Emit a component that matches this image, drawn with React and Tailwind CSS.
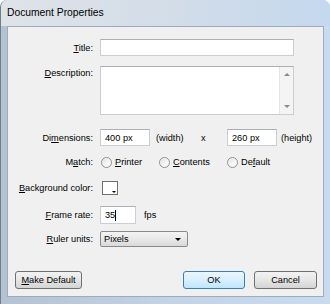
import React from "react";

const font = { fontFamily: '"Liberation Sans", Arial, sans-serif' };

function U({ children }) {
  return <span className="underline underline-offset-[1px]">{children}</span>;
}

function Label({ children, top }) {
  return (
    <div className={`w-[85px] shrink-0 text-right ${top ? "self-start pt-[1px]" : ""}`}>
      {children}
    </div>
  );
}

function TextBox({ className, children }) {
  return (
    <div
      className={`bg-white border border-[#c9ced6] border-t-[#abb0b8] flex items-center px-[4px] ${className}`}
    >
      {children}
    </div>
  );
}

function Radio({ children, className }) {
  return (
    <div className={`flex items-center gap-[3px] ${className}`}>
      <span className="w-[11px] h-[11px] rounded-full border border-[#8e8f8f] bg-gradient-to-br from-[#d9d9d9] via-[#f4f4f4] to-[#ffffff] shadow-[inset_0_0_0_1px_#f6f6f6]" />
      <span>{children}</span>
    </div>
  );
}

function Button({ children, className, primary }) {
  return (
    <div
      className={`h-[18px] rounded-[3px] border flex items-center justify-center ${
        primary
          ? "border-[#3c7fb1] bg-gradient-to-b from-[#eaf6fd] via-[#d9f0fc] to-[#bee6fd]"
          : "border-[#707070] bg-gradient-to-b from-[#f2f2f2] via-[#e6e6e6] to-[#d4d4d4]"
      } ${className}`}
    >
      {children}
    </div>
  );
}

export default function App() {
  return (
    <div
      className="w-[330px] h-[304px] flex flex-col bg-gradient-to-r from-[#b4c2d2] via-[#c2d3e6] to-[#c9dbef] rounded-t-[7px] border-l border-[#6f7d8c] overflow-hidden"
      style={font}
    >
      <div className="h-[26px] shrink-0 flex items-center px-[6px] text-[10.3px] text-black bg-gradient-to-r from-[#dfe3e8] via-[#d3dde8] to-[#c4d8ee]">
        Document Properties
      </div>
      <div className="mx-[6px] h-[271px] shrink-0 bg-[#f0f0f0] border border-[#9eabb9] flex flex-col text-[9.2px] text-black leading-[12px]">
        <div className="mt-[12px] flex items-center">
          <Label>
            <U>T</U>itle:
          </Label>
          <TextBox className="ml-[7px] w-[194px] h-[17px]" />
        </div>

        <div className="mt-[10px] flex">
          <Label top>
            <U>D</U>escription:
          </Label>
          <div className="ml-[7px] w-[194px] h-[49px] bg-white border border-[#c9ced6] border-t-[#abb0b8] flex justify-end">
            <div className="w-[14px] h-full bg-[#f4f4f4] border-l border-[#e4e4e4] flex flex-col items-center justify-between py-[6px]">
              <span className="w-0 h-0 border-l-[3px] border-r-[3px] border-b-[3px] border-l-transparent border-r-transparent border-b-[#8a8a8a]" />
              <span className="w-0 h-0 border-l-[3px] border-r-[3px] border-t-[3px] border-l-transparent border-r-transparent border-t-[#8a8a8a]" />
            </div>
          </div>
        </div>

        <div className="mt-[14px] flex items-center">
          <Label>
            Di<U>m</U>ensions:
          </Label>
          <TextBox className="ml-[7px] w-[50px] h-[17px]">400 px</TextBox>
          <span className="ml-[6px] w-[45px]">(width)</span>
          <span className="w-[26px]">x</span>
          <TextBox className="w-[50px] h-[17px]">260 px</TextBox>
          <span className="ml-[4px]">(height)</span>
        </div>

        <div className="mt-[9px] flex items-center h-[14px]">
          <Label>
            M<U>a</U>tch:
          </Label>
          <Radio className="ml-[8px] w-[58px]">
            <U>P</U>rinter
          </Radio>
          <Radio className="w-[68px]">
            <U>C</U>ontents
          </Radio>
          <Radio>
            De<U>f</U>ault
          </Radio>
        </div>

        <div className="mt-[12px] flex items-center">
          <Label>
            <U>B</U>ackground color:
          </Label>
          <div className="ml-[9px] w-[16px] h-[14px] border border-[#707070] bg-white relative">
            <span className="absolute right-[1px] bottom-[1px] w-0 h-0 border-l-[2px] border-r-[2px] border-t-[2px] border-l-transparent border-r-transparent border-t-black" />
          </div>
        </div>

        <div className="mt-[11px] flex items-center">
          <Label>
            <U>F</U>rame rate:
          </Label>
          <TextBox className="ml-[7px] w-[36px] h-[18px] border-[#7eb4ea] border-t-[#569de5]">
            35<span className="w-[1px] h-[11px] bg-black" />
          </TextBox>
          <span className="ml-[8px]">fps</span>
        </div>

        <div className="mt-[7px] flex items-center">
          <Label>
            <U>R</U>uler units:
          </Label>
          <div className="ml-[7px] w-[88px] h-[16px] rounded-[2px] border border-[#8a8a8a] bg-gradient-to-b from-[#f4f4f4] via-[#e9e9e9] to-[#d9d9d9] flex items-center justify-between px-[3px]">
            <span>Pixels</span>
            <span className="mr-[3px] w-0 h-0 border-l-[3px] border-r-[3px] border-t-[3px] border-l-transparent border-r-transparent border-t-black" />
          </div>
        </div>

        <div className="mt-auto mb-[7px] flex items-center">
          <Button className="ml-[7px] w-[67px]">
            <span>
              <U>M</U>ake Default
            </span>
          </Button>
          <Button primary className="ml-auto w-[62px]">
            OK
          </Button>
          <Button className="ml-[9px] mr-[6px] w-[63px]">Cancel</Button>
        </div>
      </div>
    </div>
  );
}
